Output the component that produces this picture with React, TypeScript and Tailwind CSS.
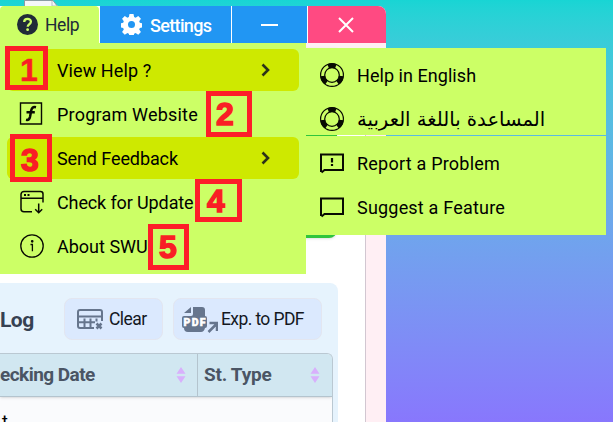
import React from "react";

type IconName = "web" | "update" | "info" | "buoy" | "report" | "chat";

const Chevron = () => (
  <svg width="12" height="14" viewBox="0 0 12 14" className="shrink-0" fill="none" stroke="#2c3318" strokeWidth="2.6">
    <path d="M3.500 1.500 9 7l-5.500 5.500" />
  </svg>
);

function MenuIcon({ name }: { name: IconName }) {
  const p = { width: 26, height: 26, viewBox: "0 0 26 26", fill: "none", stroke: "#080b02", className: "shrink-0" };
  switch (name) {
    case "web":
      return (
        <svg {...p}>
          <path d="M1.500 2h21v21h-21z" strokeWidth="1.400" />
          <path d="M17 6.300c-3.300-.8-4.300.8-4.800 3.300L11 15.900c-.5 2.300-1.600 3.400-4 2.900M7.500 11.300h8.300" strokeWidth="2.500" />
        </svg>
      );
    case "update":
      return (
        <svg {...p} strokeWidth="1.500">
          <path d="M13 22.700H5a3 3 0 0 1-3-3V5.500a3 3 0 0 1 3-3h16.500a2.500 2.500 0 0 1 2.500 2.500v8.500M2 9.300h22M19.700 14.500v9M16.200 20.200l3.500 3.500 3.500-3.500" />
          <path d="M5 6h2M8.500 6h2" strokeWidth="2" />
        </svg>
      );
    case "info":
      return (
        <svg {...p} strokeWidth="1.300">
          <circle cx="13" cy="13" r="11.200" />
          <path d="M11.500 11.500h1.900v6.800" />
          <circle cx="13.200" cy="8.300" r=".7" fill="#080b02" />
        </svg>
      );
    case "buoy":
      return (
        <svg {...p}>
          <circle cx="13" cy="13" r="11.400" strokeWidth="1.200" />
          <circle cx="13" cy="13" r="7.300" strokeWidth="1.200" />
          <circle cx="13" cy="13" r="9.400" strokeWidth="4.600" pathLength="360" strokeDasharray="48 72" strokeDashoffset="114" />
        </svg>
      );
    default:
      return (
        <svg {...p} strokeWidth="2">
          <path d="M2 22V4.500h22V20H5.500L2.500 22.500" />
          {name === "report" && <path d="M13 8v4.500M13 14v2" strokeWidth="2.200" />}
        </svg>
      );
  }
}

function MenuRow({ label, icon, spacing, active }: { label: string; icon?: IconName; spacing: string; active?: boolean }) {
  return (
    <div className={`flex h-[42px] items-center rounded-md pl-3 pr-7 ${active ? "bg-[#cee900]" : ""}`}>
      <div className="flex w-[38px] shrink-0">{icon && <MenuIcon name={icon} />}</div>
      <span className={`grow whitespace-nowrap pt-0.5 ${spacing}`}>{label}</span>
      {active && <Chevron />}
    </div>
  );
}

function SubRow({ label, icon, spacing, arabic }: { label: string; icon: IconName; spacing: string; arabic?: boolean }) {
  return (
    <div className="flex h-11 items-center">
      <div className="flex w-[38px] shrink-0"><MenuIcon name={icon} /></div>
      <span dir={arabic ? "rtl" : "ltr"} className={`whitespace-nowrap pt-0.5 ${spacing}`}>{label}</span>
    </div>
  );
}

function Marker({ n, box }: { n: string; box: string }) {
  return (
    <div className={`absolute flex items-center border-[5px] border-[#fd1e29] font-['Liberation_Sans',sans-serif] text-[32px] font-bold leading-none text-[#f91f25] ${n === "1" ? "[-webkit-text-stroke:0.6px_#f91f25]" : "[-webkit-text-stroke:1.5px_#f91f25]"} ${box}`}>
      {n}
    </div>
  );
}

const Sort = () => (
  <svg width="10" height="16" viewBox="0 0 10 16" fill="#d8b0fc"><path d="M5 0 9.500 6.700h-9zM5 16 .5 9.300h9z" /></svg>
);

export default function App() {
  return (
    <div className="relative h-[422px] w-[613px] overflow-hidden bg-linear-to-b from-[#18d5d4] to-[#8877fd] font-[Roboto,sans-serif] text-lg text-black">
      <svg className="absolute left-6 top-0" width="36" height="7" viewBox="0 0 36 7"><path d="M.5 7V.5H29L34 7" fill="#f5f7f8" stroke="#8b9da3" /><path d="M28 1v5h6" fill="none" stroke="#b7c0c5" /></svg>

      <div className="flex h-full w-[386px] flex-col pt-1.5">
        <div className="relative z-10 flex h-[37px] shrink-0 overflow-hidden rounded-tr-lg bg-white">
          <div className="flex w-[99px] items-center rounded-t-sm bg-[#ccff66] pl-[17px] text-[#202b38]">
            <svg width="21" height="21" viewBox="0 0 21 21" className="mr-[7px]">
              <circle cx="10.500" cy="10.500" r="10.500" fill="#202b38" />
              <path d="M7.200 8c.1-4 6.700-4 6.700-.2 0 2.600-3.200 2.300-3.200 5" fill="none" stroke="#ccff66" strokeWidth="2.300" />
              <circle cx="10.600" cy="15.700" r="1.400" fill="#ccff66" />
            </svg>
            <span className="pt-0.5 text-[17.5px] tracking-[-0.4px]">Help</span>
          </div>
          <div className="ml-px flex w-[131px] items-center bg-[#2196f3] pl-[21px] text-white">
            <svg width="21" height="21" viewBox="0 0 24 24" className="mr-2">
              <path fill="white" fillRule="evenodd" d="m9.700 0h4.600l.7 3.500 1.700.7 3-2 3.100 3.100-2 3 .7 1.700 2.500.7v4.600l-2.500.7-.7 1.700 2 3-3.100 3.100-3-2-1.700.7-.7 3.500H9.700L9 22.500l-1.700-.7-3 2-3.100-3.100 2-3-.7-1.700L0 15.300v-4.600l2.500-.7.7-1.700-2-3 3.100-3.100 3 2L9 3.500zM12 8a4 4 0 1 0 0 8 4 4 0 0 0 0-8z" />
            </svg>
            <span className="pt-0.5 text-[18px] font-medium tracking-[-0.65px]">Settings</span>
          </div>
          <div className="ml-px flex w-[75px] items-center justify-center bg-[#2196f3]"><div className="h-0.5 w-[17px] bg-white" /></div>
          <div className="ml-px flex grow items-center justify-center bg-[#ff4a82] pr-[3px]">
            <svg width="16" height="16" viewBox="0 0 16 16" stroke="white" strokeWidth="2"><path d="m1 1 14 14M15 1 1 15" /></svg>
          </div>
        </div>
        <div className="flex grow flex-col bg-[#ffeff4] pr-5 pt-[5px]">
          <div className="flex grow flex-col border-r border-[#d2c7d1] bg-white">
            <div className="h-[190px] w-[337px] rounded-br-lg bg-[#2fc53c] shadow-sm" />
            <div className="mt-[45px] flex w-[338px] grow flex-col rounded-tr-lg bg-[#e6f3fd] pt-[15px]">
              <div className="flex h-[42px] items-center">
                <span className="w-16 pt-0.5 text-[21px] font-bold tracking-[-0.5px] text-[#364152]">Log</span>
                <div className="flex h-[42px] w-[99px] items-center rounded-lg border border-[#e3e6f0] bg-[#dbe9fe] pl-3">
                  <svg width="26" height="21" viewBox="0 0 26 21" className="mr-1.5 shrink-0" fill="none" stroke="#66758d" strokeWidth="2">
                    <path d="M17 19H3a2 2 0 0 1-2-2V3a2 2 0 0 1 2-2h20a2 2 0 0 1 2 2v9M1 7.500h24M1 13.300h17M7.500 9.500V19M13.500 9.500V19M19.500 9.500v3" /><path d="m19.500 14.500 5 5m0-5-5 5" strokeWidth="2.500" />
                  </svg>
                  <span className="pt-0.5 text-[17.5px] tracking-[-0.55px] text-[#14181f]">Clear</span>
                </div>
                <div className="ml-2.5 flex h-[42px] w-[149px] items-center rounded-lg border border-[#e3e6f0] bg-[#dbe9fe] pl-[7px]">
                  <svg width="37" height="27" viewBox="0 0 37 27" className="mr-[3px] shrink-0">
                    <path d="M3 7 10 1v6zM12 1h9q3 0 3 3v6q2 0 2 2v8q0 2-2 2-1 4-4 4H7q-4 0-4-4-2 0-2-2v-8q0-2 2-2h7q2 0 2-2z" fill="#66758d" />
                    <text x="2.500" y="20" fill="#fff" stroke="#fff" strokeWidth=".5" fontSize="10.500" fontWeight="900" fontFamily="Roboto" textLength="22">PDF</text>
                    <path d="m27.500 26 8-8M28.500 17h7.500v8" fill="none" stroke="#66758d" strokeWidth="2.500" />
                  </svg>
                  <span className="whitespace-nowrap pt-0.5 text-[17.5px] tracking-[-0.6px] text-[#14181f]">Exp. to PDF</span>
                </div>
              </div>
              <div className="mt-[13px] flex w-[333px] grow flex-col overflow-hidden rounded-tr-md border-r border-t border-[#bac8d2] bg-[#fafbfd]">
                <div className="flex h-[43px] shrink-0 border-b border-[#b4c4ce] bg-[#d1e7f1] text-[19px] font-bold text-[#4a5564] shadow">
                  <div className="flex w-[198px] items-center justify-between border-r border-[#b4c4ce] pr-[11px]"><span className="whitespace-nowrap tracking-[-0.55px]">ecking Date</span><Sort /></div>
                  <div className="flex grow items-center justify-between pl-1.5 pr-3"><span className="tracking-[-0.25px]">St. Type</span><Sort /></div>
                </div>
                <span className="pl-0.5 pt-[13px] leading-6">t</span>
              </div>
            </div>
          </div>
        </div>
      </div>

      <div className="absolute left-0 top-[43px] z-20 flex h-[231px] w-[306px] flex-col gap-0.5 bg-[#ccff66] px-[7px] pt-1.5">
        <MenuRow label="View Help ?" spacing="tracking-[0.1px]" active />
        <MenuRow label="Program Website" icon="web" spacing="tracking-[0.2px]" />
        <MenuRow label="Send Feedback" spacing="tracking-[-0.1px]" active />
        <MenuRow label="Check for Update" icon="update" spacing="tracking-[-0.12px]" />
        <MenuRow label="About SWU" icon="info" spacing="tracking-[0px]" />
      </div>

      <div className="absolute left-[306px] top-12 z-20 flex w-[300px] flex-col gap-px">
        <div className="h-[87px] bg-[#ccff66] pl-[13px] pt-[5px]">
          <SubRow label="Help in English" icon="buoy" spacing="tracking-[0.05px]" />
          <SubRow label="المساعدة باللغة العربية" icon="buoy" spacing="font-['DejaVu_Sans',sans-serif] text-[19.600px]" arabic />
        </div>
        <div className="h-[99px] bg-[#ccff66] pl-[13px] pt-[5px]">
          <SubRow label="Report a Problem" icon="report" spacing="tracking-[0.22px]" />
          <SubRow label="Suggest a Feature" icon="chat" spacing="tracking-[0.2px]" />
        </div>
      </div>

      <div className="absolute inset-0 z-30">
        <Marker n="1" box="left-[5px] top-[46px] h-11 w-[43px] pl-[10px] pt-1" />
        <Marker n="2" box="left-[206px] top-[91px] h-[46px] w-[46px] pl-[5px]" />
        <Marker n="3" box="left-[10px] top-[134px] h-12 w-[42px] pl-1.5 pt-1" />
        <Marker n="4" box="left-[195px] top-[179px] h-[43px] w-[47px] pl-[7px]" />
        <Marker n="5" box="left-[148px] top-[224px] h-[46px] w-[41px] pl-1.5" />
      </div>
    </div>
  );
}
